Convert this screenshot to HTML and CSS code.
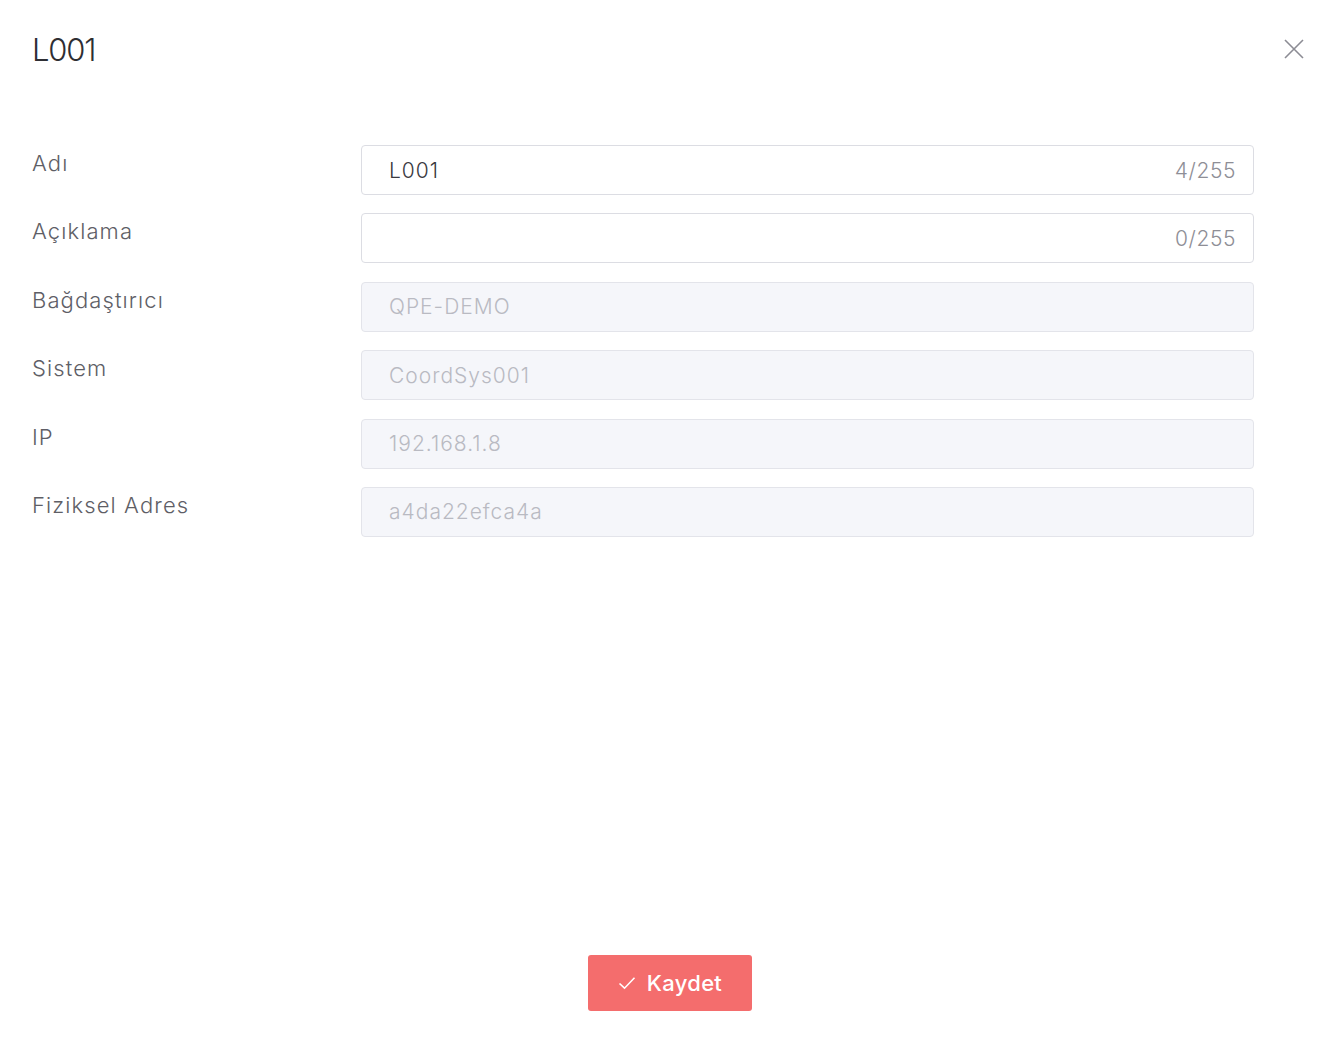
FILE: index.html
```html
<!DOCTYPE html>
<html lang="tr">
<head>
    <meta charset="UTF-8">
    <meta name="viewport" content="width=device-width, initial-scale=1.0">
    <title>L001</title>
    <link rel="stylesheet" href="styles.css">
</head>
<body>
    <div class="modal">
        <div class="modal-head">
            <h1 class="modal-title">L001</h1>
            <span class="close-btn">
                <svg width="20" height="20" viewBox="0 0 20 20">
                    <path d="M1 1 L19 19 M19 1 L1 19" stroke="#8c8c94" stroke-width="1.6" fill="none"/>
                </svg>
            </span>
        </div>

        <form class="form">
            <div class="row">
                <label class="lbl">Adı</label>
                <div class="field">
                    <span class="val">L001</span>
                    <span class="count">4/255</span>
                </div>
            </div>
            <div class="row">
                <label class="lbl">Açıklama</label>
                <div class="field">
                    <span class="val"></span>
                    <span class="count">0/255</span>
                </div>
            </div>
            <div class="row">
                <label class="lbl">Bağdaştırıcı</label>
                <div class="field disabled"><span class="val">QPE-DEMO</span></div>
            </div>
            <div class="row">
                <label class="lbl">Sistem</label>
                <div class="field disabled"><span class="val">CoordSys001</span></div>
            </div>
            <div class="row">
                <label class="lbl">IP</label>
                <div class="field disabled"><span class="val">192.168.1.8</span></div>
            </div>
            <div class="row">
                <label class="lbl">Fiziksel Adres</label>
                <div class="field disabled"><span class="val">a4da22efca4a</span></div>
            </div>
        </form>

        <div class="modal-foot">
            <button type="button" class="save-btn">
                <svg width="18" height="14" viewBox="0 0 18 14">
                    <path d="M1.5 7.5 L6.5 12.2 L16.5 1.8" stroke="#fff" stroke-width="1.6" fill="none"/>
                </svg>
                Kaydet
            </button>
        </div>
    </div>
</body>
</html>
```

FILE: styles.css
```css
* {
    margin: 0;
    padding: 0;
    box-sizing: border-box;
}
body {
    background: #fff;
    font-family: Inter, "Open Sans", sans-serif;
    color: #5c5c66;
}
.modal {
    height: 1056px;
    display: flex;
    flex-direction: column;
    padding: 0 86px 45px 32px;
}
.modal-head {
    display: flex;
    justify-content: space-between;
    align-items: flex-start;
    padding-top: 30px;
    height: 145px;
}
.modal-title {
    font-size: 31px;
    font-weight: 300;
    line-height: 40px;
    letter-spacing: -1.2px;
    color: #2e2e33;
}
.close-btn {
    margin-right: -50px;
    margin-top: 9px;
    cursor: pointer;
}
.form {
    display: flex;
    flex-direction: column;
    gap: 18.4px;
}
.row {
    display: flex;
    align-items: flex-start;
}
.lbl {
    width: 329px;
    flex-shrink: 0;
    font-size: 22px;
    font-weight: 300;
    line-height: 36px;
    letter-spacing: 1.1px;
    color: #5e5e66;
}
.field {
    flex: 1;
    height: 50px;
    border: 1px solid #dcdde3;
    border-radius: 4px;
    display: flex;
    align-items: center;
    justify-content: space-between;
    padding: 0 17px 0 27px;
    font-size: 21px;
    font-weight: 300;
    letter-spacing: 1px;
}
.val {
    color: #3a3a40;
}
.count {
    color: #8e8e96;
    letter-spacing: 0.6px;
}
.field.disabled {
    background: #f5f6fa;
    border-color: #e3e4ea;
}
.field.disabled .val {
    color: #b9bac2;
}
.modal-foot {
    margin-top: auto;
    display: flex;
    justify-content: center;
    padding-left: 54px;
}
.save-btn {
    width: 164px;
    height: 56px;
    border: none;
    border-radius: 3px;
    background: #f46d6d;
    color: #fff;
    font-family: inherit;
    font-size: 22px;
    font-weight: 500;
    letter-spacing: 0.3px;
    display: flex;
    align-items: center;
    justify-content: center;
    gap: 11px;
    cursor: pointer;
}
```
